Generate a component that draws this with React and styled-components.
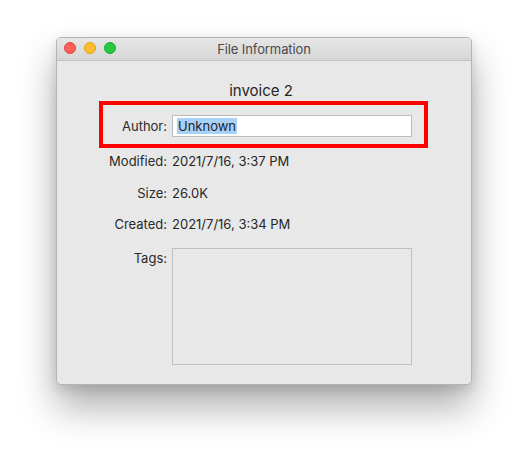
import React from "react";
import styled, { createGlobalStyle } from "styled-components";

const GlobalStyle = createGlobalStyle`
    html, body {
        margin: 0;
        padding: 0;
        background: #ffffff;
    }
    body {
        font-family: Inter, "Liberation Sans", Arial, sans-serif;
        -webkit-font-smoothing: antialiased;
    }
`;

const Page = styled.div`
    width: 528px;
    height: 459px;
    padding: 37px 0 0 56px;
    box-sizing: border-box;
    overflow: hidden;
`;

const Window = styled.div`
    width: 416px;
    height: 348px;
    box-sizing: border-box;
    display: flex;
    flex-direction: column;
    background: #e8e8e8;
    border: 1px solid #b4b4b4;
    border-radius: 5px;
    overflow: hidden;
    box-shadow: 0 22px 38px rgba(0, 0, 0, 0.32), 0 4px 12px rgba(0, 0, 0, 0.12);
`;

const TitleBar = styled.div`
    position: relative;
    height: 22px;
    flex: none;
    display: flex;
    align-items: center;
    justify-content: center;
    background: linear-gradient(#e6e6e6, #d6d6d6);
    border-bottom: 1px solid #c2c2c2;
`;

const Lights = styled.div`
    position: absolute;
    left: 7px;
    top: 4px;
    display: flex;
    gap: 8px;
`;

const Light = styled.span`
    width: 12px;
    height: 12px;
    box-sizing: border-box;
    border-radius: 50%;
    background: ${p => p.$fill};
    border: 0.5px solid ${p => p.$edge};
`;

const Title = styled.div`
    font-size: 13px;
    color: #4a4a4a;
    letter-spacing: -0.1px;
`;

const Content = styled.div`
    flex: 1;
    display: flex;
    flex-direction: column;
    padding: 21px 0 0 42px;
`;

const Heading = styled.div`
    width: 332px;
    margin-left: -4px;
    text-align: center;
    font-size: 15px;
    line-height: 18px;
    color: #262626;
`;

const Form = styled.div`
    display: flex;
    flex-direction: column;
    margin-top: 1px;
`;

const Row = styled.div`
    display: grid;
    grid-template-columns: 64px 240px;
    column-gap: 5px;
    align-items: ${p => (p.$top ? "start" : "center")};
    border: 4px solid ${p => (p.$highlight ? "#fd0000" : "transparent")};
    padding: ${p => (p.$highlight ? "10px 12px 7px 0" : "0 12px 0 0")};
    margin-top: ${p => p.$gap || 0}px;
    width: 329px;
    box-sizing: border-box;
`;

const Label = styled.div`
    text-align: right;
    font-size: 13px;
    line-height: 18px;
    color: #2a2a2a;
    white-space: nowrap;
    padding-top: ${p => (p.$top ? "1px" : "0")};
`;

const Value = styled.div`
    font-size: 13px;
    line-height: 18px;
    color: #262626;
    white-space: nowrap;
`;

const TextField = styled.div`
    height: 22px;
    box-sizing: border-box;
    background: #ffffff;
    border: 1px solid #bdbdbd;
    display: flex;
    align-items: center;
    padding-left: 4px;
    font-size: 13px;
    color: #1f1f1f;
`;

const Selected = styled.span`
    background: #a8d1f8;
    line-height: 16px;
    padding: 0 1px;
`;

const TagsBox = styled.div`
    height: 117px;
    box-sizing: border-box;
    border: 1px solid #bfbfbf;
    background: #e8e8e8;
`;

const info = [
    { label: "Modified:", value: "2021/7/16, 3:37 PM", gap: 0 },
    { label: "Size:", value: "26.0K", gap: 6 },
    { label: "Created:", value: "2021/7/16, 3:34 PM", gap: 5 },
];

export default function App() {
    return (
        <React.Fragment>
            <GlobalStyle />
            <Page>
                <Window>
                    <TitleBar>
                        <Lights>
                            <Light $fill="#fe5f57" $edge="#e2463f" />
                            <Light $fill="#febc2e" $edge="#e1a116" />
                            <Light $fill="#28c840" $edge="#14ae2c" />
                        </Lights>
                        <Title>File Information</Title>
                    </TitleBar>
                    <Content>
                        <Heading>invoice 2</Heading>
                        <Form>
                            <Row $highlight>
                                <Label>Author:</Label>
                                <TextField>
                                    <Selected>Unknown</Selected>
                                </TextField>
                            </Row>
                            {info.map(item => (
                                <Row key={item.label} $gap={item.gap}>
                                    <Label>{item.label}</Label>
                                    <Value>{item.value}</Value>
                                </Row>
                            ))}
                            <Row $top $gap={7}>
                                <Label $top>Tags:</Label>
                                <TagsBox />
                            </Row>
                        </Form>
                    </Content>
                </Window>
            </Page>
        </React.Fragment>
    );
}
